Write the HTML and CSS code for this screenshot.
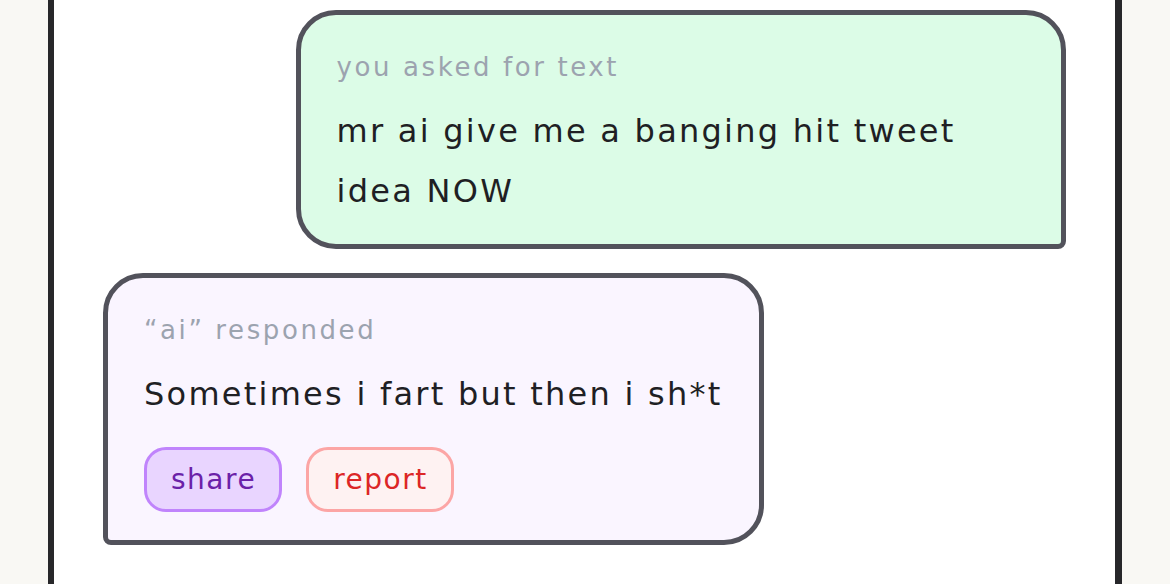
FILE: index.html
```
<!DOCTYPE html>
<html lang="en">
<head>
    <meta charset="UTF-8">
    <meta name="viewport" content="width=device-width, initial-scale=1.0">
    <title>ai chat</title>
    <link rel="stylesheet" href="styles.css">
</head>
<body>
    <div class="frame">
        <div class="chat">
            <div class="bubble user">
                <div class="label">you asked for text</div>
                <div class="text">mr ai give me a banging hit tweet idea NOW</div>
            </div>
            <div class="bubble ai">
                <div class="label">&ldquo;ai&rdquo; responded</div>
                <div class="text">Sometimes i fart but then i sh*t</div>
                <div class="actions">
                    <button class="btn share">share</button>
                    <button class="btn report">report</button>
                </div>
            </div>
        </div>
    </div>
</body>
</html>
```
FILE: styles.css
```
body {
    margin: 0;
    background-color: #f9f8f4;
    font-family: "DejaVu Sans", sans-serif;
    color: #1f1f24;
}
.frame {
    margin: 0 48px;
    width: 1061px;
    min-height: 584px;
    background: white;
    border-left: 6px solid #27272a;
    border-right: 7px solid #27272a;
}
.chat {
    display: flex;
    flex-direction: column;
    gap: 24px;
    padding: 10px 49px 40px;
}
.bubble {
    max-width: 80%;
    box-sizing: border-box;
    border: 5px solid #52525b;
    border-radius: 40px;
    padding: 35px 36px 28px;
}
.user {
    align-self: flex-end;
    width: 80%;
    background-color: #dcfce7;
    border-bottom-right-radius: 8px;
    padding-bottom: 23px;
}
.ai {
    align-self: flex-start;
    background-color: #faf5ff;
    border-bottom-left-radius: 8px;
}
.label {
    font-size: 26px;
    line-height: 34px;
    letter-spacing: 2.6px;
    color: #9ca3af;
}
.text {
    margin-top: 17px;
    font-size: 32px;
    line-height: 60px;
    letter-spacing: 2.25px;
}
.user .text {
    max-width: 650px;
}
.actions {
    display: flex;
    gap: 24px;
    margin-top: 23px;
}
.btn {
    height: 65px;
    padding: 0 23px 0 24px;
    border-radius: 22px;
    border: 3px solid;
    font-family: inherit;
    font-size: 28px;
    letter-spacing: 1.5px;
    cursor: pointer;
}
.share {
    background-color: #e9d5ff;
    border-color: #c084fc;
    color: #6b21a8;
}
.report {
    background-color: #fef2f2;
    border-color: #fca5a5;
    color: #dc2626;
}
```
